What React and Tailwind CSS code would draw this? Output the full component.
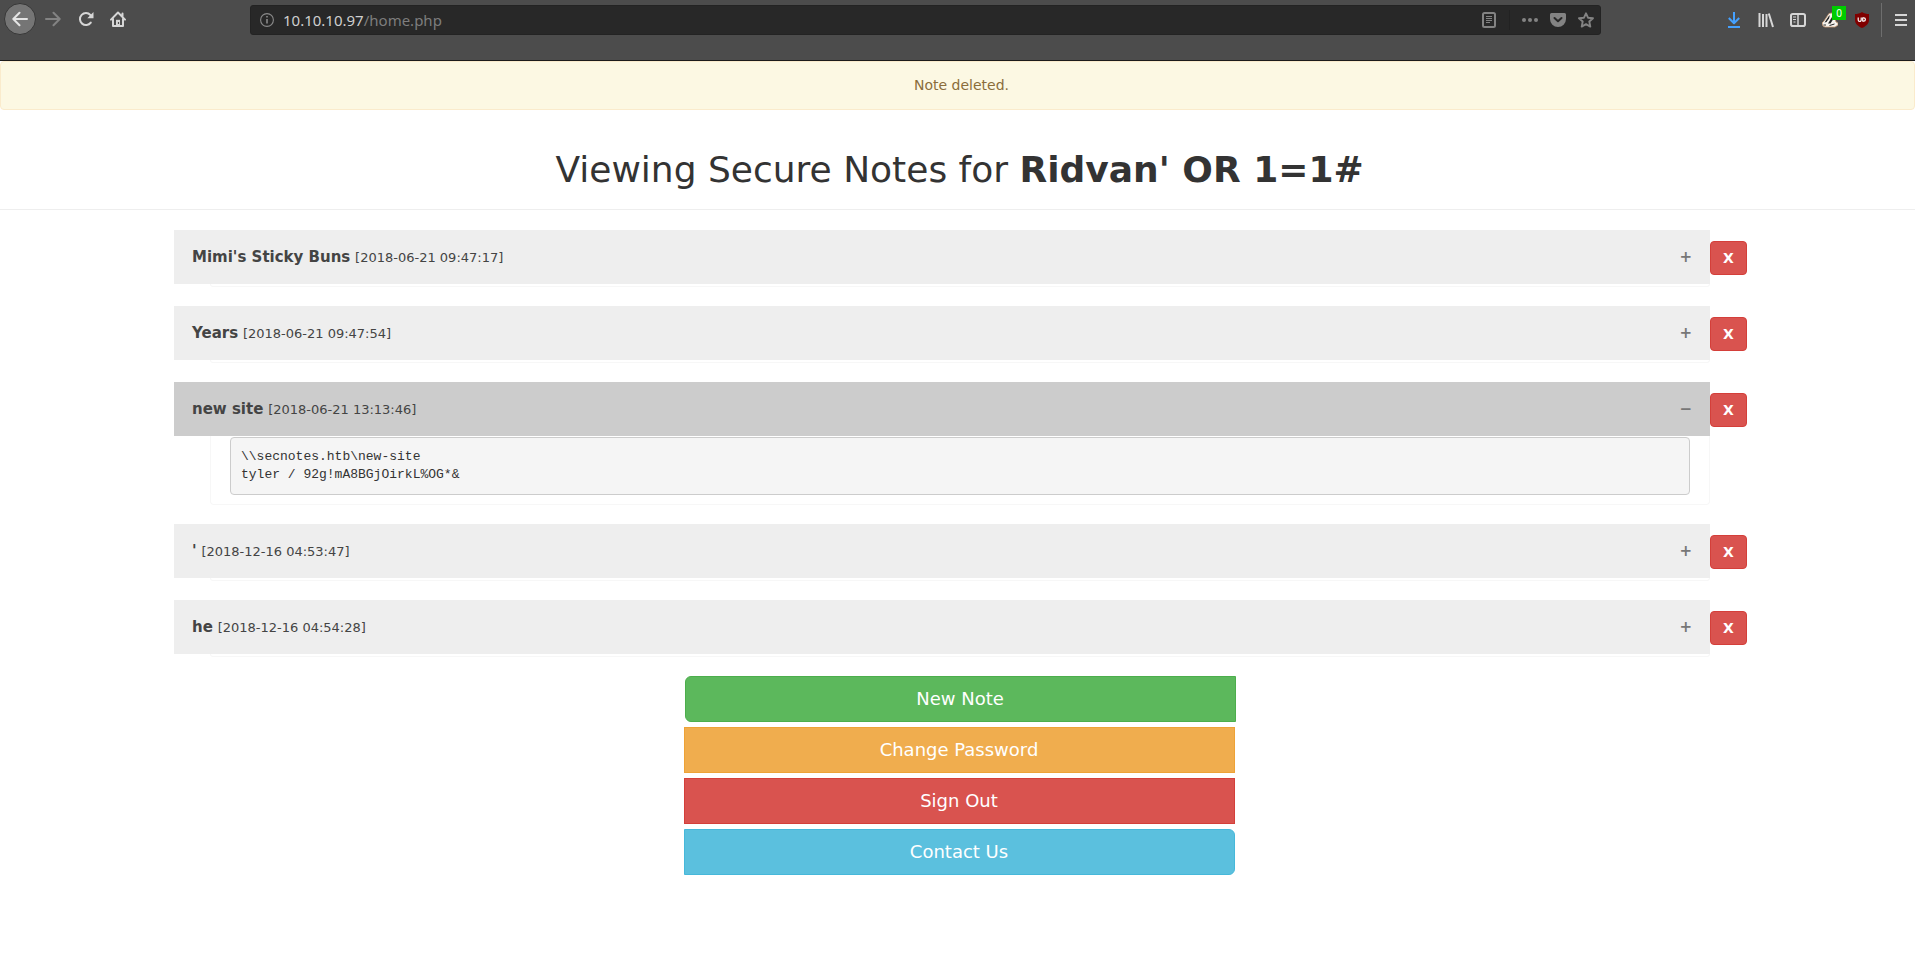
import { useState } from "react";

const initialNotes = [
  { id: 1, title: "Mimi's Sticky Buns", date: "2018-06-21 09:47:17" },
  { id: 2, title: "Years", date: "2018-06-21 09:47:54" },
  {
    id: 3,
    title: "new site",
    date: "2018-06-21 13:13:46",
    body: "\\\\secnotes.htb\\new-site\ntyler / 92g!mA8BGjOirkL%OG*&",
  },
  { id: 4, title: "'", date: "2018-12-16 04:53:47" },
  { id: 5, title: "he", date: "2018-12-16 04:54:28" },
];

function Icon({ children, className = "text-[#d6d6d6]" }) {
  return (
    <svg
      viewBox="0 0 16 16"
      className={`size-4 shrink-0 ${className}`}
      fill="none"
      stroke="currentColor"
      strokeWidth="2"
      strokeLinecap="round"
      strokeLinejoin="round"
      aria-hidden="true"
    >
      {children}
    </svg>
  );
}

function ToolButton({ label, children, className = "" }) {
  return (
    <button
      type="button"
      aria-label={label}
      className={`flex shrink-0 items-center justify-center ${className}`}
    >
      {children}
    </button>
  );
}

function BrowserBar() {
  return (
    <header className="flex h-[61px] items-start border-b border-[#1c1b1b] bg-[#4c4c4c] pt-[3px]">
      <nav aria-label="Browser" className="flex w-[250px] shrink-0 items-center pl-1">
        <ToolButton label="Back" className="size-8 rounded-full border border-[#373737] bg-[#757575]">
          <Icon className="text-[#e4e4e4]">
            <path d="M15 8H1.5M7.5 1.8L1.3 8l6.2 6.2" />
          </Icon>
        </ToolButton>
        <ToolButton label="Forward" className="ml-[9px]">
          <Icon className="text-[#838383]">
            <path d="M1 8h13.5M8.5 1.8L14.7 8l-6.2 6.2" />
          </Icon>
        </ToolButton>
        <ToolButton label="Reload" className="ml-[17px]">
          <Icon>
            <path d="M12.8 11.6A6 6 0 1 1 12.4 4" />
            <path d="M15.500 1v6.200H9.300z" fill="currentColor" stroke="none" />
          </Icon>
        </ToolButton>
        <ToolButton label="Home" className="ml-4">
          <Icon>
            <path d="M1 8.600L8 1.500l7 7.100M3 8v7h10V8M12.500 2.500v3" />
            <path d="M6 15V8.800h4V15z" fill="currentColor" stroke="none" />
            <path d="M8.500 11v2" stroke="#4c4c4c" strokeWidth="1.200" strokeLinecap="butt" />
          </Icon>
        </ToolButton>
      </nav>

      <div className="mt-[2px] flex h-[30px] min-w-0 flex-1 items-center rounded-[3px] border border-[#232323] bg-[#282828] pr-[6px] pl-[9px] text-[#8a8a8a]">
        <svg viewBox="0 0 14 14" className="size-[14px] shrink-0" fill="none" stroke="currentColor" aria-hidden="true">
          <circle cx="7" cy="7" r="6.4" strokeWidth="1.1" />
          <path d="M7 6v4.5M7 3v1.6" strokeWidth="1.6" />
        </svg>
        <p className="ml-[9px] min-w-0 flex-1 truncate font-['Noto_Sans',sans-serif] text-[15px] leading-6 text-[#7d7d7d]">
          <span className="text-[#cfcfcf]">10.10.10.97</span>/home.php
        </p>
        <ToolButton label="Reader view">
          <Icon className="text-[#838383]">
            <rect x="2" y="1" width="12" height="14" rx="1.5" />
            <path d="M5 4.5h6M5 6.5h6M5 8.5h6M5 10.5h4" strokeWidth="1" strokeLinecap="butt" />
          </Icon>
        </ToolButton>
        <span className="mx-3 h-5 w-px bg-[#222]" />
        <ToolButton label="Page actions">
          <Icon className="text-[#838383]">
            <g fill="currentColor" stroke="none">
              <circle cx="2" cy="8" r="2" />
              <circle cx="8" cy="8" r="2" />
              <circle cx="14" cy="8" r="2" />
            </g>
          </Icon>
        </ToolButton>
        <ToolButton label="Save to Pocket" className="ml-3">
          <Icon className="text-[#838383]">
            <path d="M1.5 1h13A1.5 1.5 0 0 1 16 2.500V7A8 8 0 0 1 0 7V2.500A1.500 1.500 0 0 1 1.500 1z" fill="currentColor" stroke="none" />
            <path d="M4.500 6L8 9.300 11.500 6" className="text-[#282828]" stroke="currentColor" />
          </Icon>
        </ToolButton>
        <ToolButton label="Bookmark" className="ml-3">
          <Icon className="text-[#838383]">
            <path d="M8 1.300l2 4.400 5 .5-3.700 3.300 1 5.100L8 12.100l-4.300 2.500 1-5.100L1 6.200l5-.5z" strokeWidth="1.900" />
          </Icon>
        </ToolButton>
      </div>

      <nav aria-label="Tools" className="flex w-[314px] shrink-0 items-center justify-end pr-2">
        <ToolButton label="Downloads">
          <Icon className="text-[#45a1ff]">
            <path d="M8 0v10.500M2.800 6L8 11.200 13.200 6" strokeLinecap="butt" />
            <path d="M2 15h12" strokeLinecap="butt" />
          </Icon>
        </ToolButton>
        <ToolButton label="Library" className="ml-4">
          <Icon>
            <path d="M1.500 1v14M5 2v13M8.500 2v13M10.800 1.500L15 15" strokeLinecap="butt" />
          </Icon>
        </ToolButton>
        <ToolButton label="Sidebars" className="ml-4">
          <Icon>
            <rect x="1" y="2" width="14" height="12" rx="1.800" />
            <path d="M8 2v12" strokeWidth="1.500" />
            <path d="M3 5h3M3 7.500h3M3.500 10h2" strokeWidth="1" strokeLinecap="butt" />
          </Icon>
        </ToolButton>
        <div className="relative ml-4 flex">
          <ToolButton label="Privacy Badger">
            <svg viewBox="0 0 16 16" className="size-4" aria-hidden="true">
              <path d="M0 11l2-2 5-7.500L10 1l2 3 2 6 2 1v2l-3 2H3l-2-1z" fill="#f6f3ee" stroke="#c99b74" strokeWidth=".8" />
              <path d="M2.500 10.500L6.500 4.500 8 3 7 6.500 4.500 10z" fill="#262626" />
              <path d="M6 11.500l4-6.500 1 2.500-2.500 4z" fill="#262626" />
              <path d="M1.500 13h2.500M7.500 13.500l5-1.500" stroke="#262626" strokeWidth="1" fill="none" />
            </svg>
          </ToolButton>
          <span className="absolute -top-[6px] left-[10px] flex h-[14px] w-[14px] items-center justify-center bg-[#00cc00] font-['Noto_Sans',sans-serif] text-[10px] leading-none text-white">
            0
          </span>
        </div>
        <ToolButton label="uBlock Origin" className="ml-4">
          <svg viewBox="0 0 16 16" className="size-4" aria-hidden="true">
            <path d="M8 0c2 1.500 4.500 2 7 2v6c0 4-3.500 6.500-7 8-3.500-1.500-7-4-7-8V2c2.500 0 5-.5 7-2z" fill="#800000" />
            <path d="M4.200 5.500v2.400a1.500 1.500 0 0 0 3 0V5.500M8.700 5.500v3.900M8.700 5.800h1a1.700 1.700 0 0 1 0 3.400h-1" fill="none" stroke="#fff" strokeWidth="1.200" />
          </svg>
        </ToolButton>
        <span className="mr-[13px] ml-[11px] h-[34px] w-px bg-[#6e6e6e]" />
        <ToolButton label="Open menu">
          <svg viewBox="0 0 12 16" className="h-4 w-3 text-[#d6d6d6]" fill="none" stroke="currentColor" strokeWidth="2" aria-hidden="true">
            <path d="M0 3h12M0 8h12M0 13h12" />
          </svg>
        </ToolButton>
      </nav>
    </header>
  );
}

function Note({ note, open, onToggle, onDelete }) {
  return (
    <li className="flex items-start">
      <div className="min-w-0 flex-1">
        <button
          type="button"
          aria-expanded={open}
          onClick={onToggle}
          className={`flex h-[54px] w-full items-center justify-between px-[18px] text-left text-[15px] text-[#444] ${open ? "bg-[#ccc]" : "bg-[#eee]"}`}
        >
          <span>
            <b>{note.title}</b> <small className="text-[13px]">[{note.date}]</small>
          </span>
          <span className="font-bold text-[#777]">{open ? "\u2212" : "+"}</span>
        </button>
        <div className="ml-[36px] rounded-b border border-t-0 border-[#f7f7f7] px-[19px]">
          {open ? (
            <div className="pt-px pb-[9px]">
              <pre className="h-[58px] rounded border border-[#ccc] bg-[#f5f5f5] p-[10px] font-['Liberation_Mono',monospace] text-[13px] leading-[18px] text-[#333]">
                {note.body}
              </pre>
            </div>
          ) : (
            <div className="h-[2px]" />
          )}
        </div>
      </div>
      <button
        type="button"
        aria-label={`Delete ${note.title}`}
        onClick={onDelete}
        className="mt-[11px] h-[34px] w-[37px] rounded border border-[#d43f3a] bg-[#d9534f] text-[14px] leading-5 font-bold text-white"
      >
        X
      </button>
    </li>
  );
}

const actionClass = "flex h-[46px] items-center justify-center border text-[18px] leading-6 text-white";

export default function App() {
  const [notes, setNotes] = useState(initialNotes);
  const [openId, setOpenId] = useState(3);

  return (
    <div className="min-h-screen bg-white font-['DejaVu_Sans',sans-serif] text-[14px] leading-5 text-[#333]">
      <BrowserBar />
      <main>
        <div role="alert" className="rounded border border-[#faebcc] bg-[#fcf8e3] pt-[13px] pr-4 pb-[14px] pl-6 text-center text-[#8a6d3b]">
          Note deleted.
        </div>
        <div className="border-b border-[#eee] pt-10 pb-[19px] pl-1 text-center">
          <h1 className="text-[36px] leading-10">
            Viewing Secure Notes for <b>Ridvan' OR 1=1#</b>
          </h1>
        </div>
        <ul className="mt-5 flex flex-col gap-[19px] pr-[168px] pl-[174px]">
          {notes.map((note) => (
            <Note
              key={note.id}
              note={note}
              open={openId === note.id}
              onToggle={() => setOpenId(openId === note.id ? null : note.id)}
              onDelete={() => setNotes(notes.filter((n) => n.id !== note.id))}
            />
          ))}
        </ul>
        <nav aria-label="Account" className="mt-[19px] flex justify-center pl-1">
          <div className="flex w-[552px] flex-col gap-[5px]">
            <a href="#new" className={`${actionClass} ml-px rounded-l-md border-[#4cae4c] bg-[#5cb85c]`}>New Note</a>
            <a href="#password" className={`${actionClass} mr-px border-[#eea236] bg-[#f0ad4e]`}>Change Password</a>
            <a href="#signout" className={`${actionClass} mr-px border-[#d43f3a] bg-[#d9534f]`}>Sign Out</a>
            <a href="#contact" className={`${actionClass} mr-px rounded-r-md border-[#46b8da] bg-[#5bc0de]`}>Contact Us</a>
          </div>
        </nav>
      </main>
    </div>
  );
}
